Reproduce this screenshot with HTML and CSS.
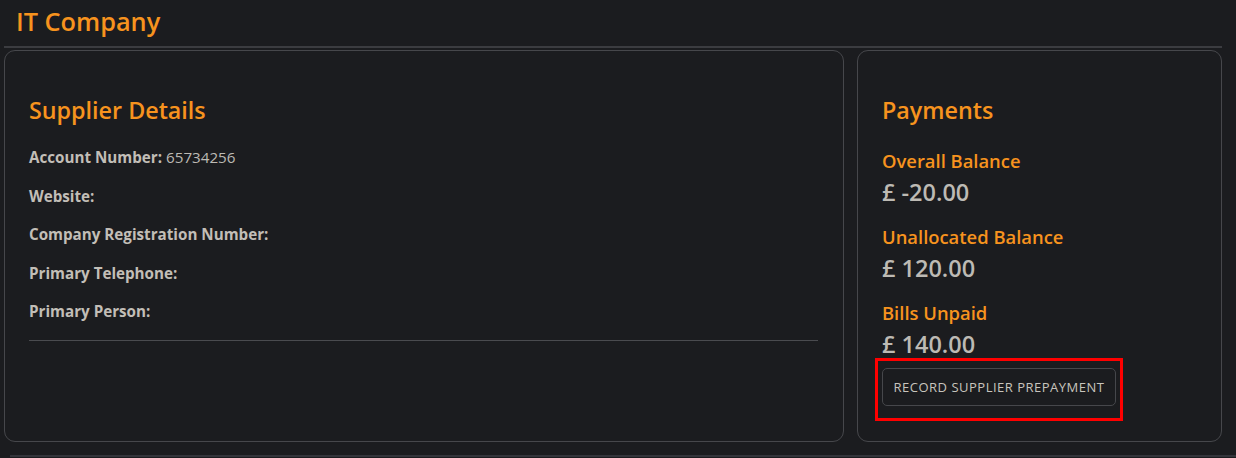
FILE: index.html
```html
<!DOCTYPE html>
<html lang="en">
<head>
  <meta charset="UTF-8" />
  <title>IT Company - Supplier</title>
  <link rel="stylesheet" href="styles.css">
</head>
<body>
  <h1 class="page-title">IT Company</h1>
  <div class="rule"></div>

  <div class="cards">
    <div class="card details">
      <h2>Supplier Details</h2>
      <p><strong>Account Number:</strong> 65734256</p>
      <p><strong>Website:</strong></p>
      <p><strong>Company Registration Number:</strong></p>
      <p><strong>Primary Telephone:</strong></p>
      <p><strong>Primary Person:</strong></p>
      <hr>
    </div>

    <div class="card payments">
      <h2>Payments</h2>
      <h3>Overall Balance</h3>
      <div class="amount">£ -20.00</div>
      <h3>Unallocated Balance</h3>
      <div class="amount">£ 120.00</div>
      <h3>Bills Unpaid</h3>
      <div class="amount">£ 140.00</div>
      <div class="highlight">
        <button type="button">Record Supplier Prepayment</button>
      </div>
    </div>
  </div>

  <div class="next-section"></div>
</body>
</html>
```

FILE: styles.css
```css
body {
  margin: 0;
  background-color: #1b1c1f;
  font-family: "Open Sans", "Noto Sans", sans-serif;
  color: #bdbab4;
  height: 100vh;
  overflow: hidden;
}

.page-title {
  margin: 0;
  padding: 5px 16px 0;
  height: 41px;
  box-sizing: border-box;
  font-size: 25.3px;
  font-weight: 600;
  line-height: 32px;
  color: #f7931e;
}

.rule {
  margin: 5px 14px 0 4px;
  border-top: 2px solid #3b3c40;
}

.cards {
  display: flex;
  gap: 13px;
  padding: 2px 14px 0 4px;
}

.card {
  height: 392px;
  box-sizing: border-box;
  border: 1px solid #46474b;
  border-radius: 11px;
  padding: 44px 25px 0 24px;
}

.details {
  flex: 1;
}

.payments {
  width: 365px;
}

h2 {
  margin: 0 0 13px;
  font-size: 23.3px;
  font-weight: 600;
  line-height: 30px;
  color: #f7931e;
}

.payments h2 {
  margin-bottom: 23px;
}

.details p {
  margin: 0;
  font-size: 15.2px;
  line-height: 38.5px;
}

.details strong {
  color: #c2beb7;
}

.details hr {
  margin: 9px 0 0;
  border: 0;
  border-top: 1px solid #4a4b4f;
}

h3 {
  margin: 13px 0 0;
  font-size: 18.4px;
  font-weight: 600;
  line-height: 26px;
  color: #f7931e;
}

.amount {
  font-size: 23.5px;
  font-weight: 600;
  line-height: 37px;
  margin: 0 0 3px;
  color: #bdbab4;
}

.payments .amount:last-of-type {
  margin-bottom: 0;
}

.highlight {
  margin: -8px 0 0 -7px;
  width: 248px;
  box-sizing: border-box;
  border: 3px solid #ff0000;
  padding: 7px 4px 12px 4px;
}

button {
  display: block;
  width: 234px;
  height: 38px;
  padding: 0;
  background-color: #1b1c1f;
  border: 1px solid #46474b;
  border-radius: 5px;
  color: #c8c4bd;
  font-family: "Open Sans", "Noto Sans", sans-serif;
  font-size: 13px;
  letter-spacing: 0.5px;
  text-transform: uppercase;
  cursor: pointer;
}

.next-section {
  margin: 13px 0 0 10px;
  border-top: 2px solid #33343a;
}
```
